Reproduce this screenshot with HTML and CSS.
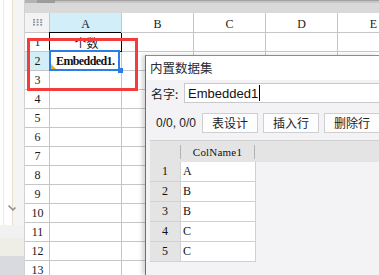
FILE: index.html
```html
<!DOCTYPE html>
<html lang="zh">
<head>
<meta charset="utf-8">
<link rel="stylesheet" href="styles.css">
</head>
<body>
<div class="app">
  <aside class="side">
    <div class="side-main">
      <svg class="chev" width="8" height="7" viewBox="0 0 8 7"><path d="M0.5 0.5 L5 5 L7.5 2.5" fill="none" stroke="#8a8a8a" stroke-width="1.5"/></svg>
    </div>
    <div class="side-f1"></div>
    <div class="side-f2"></div>
    <div class="side-f3"></div>
  </aside>
  <main class="sheet">
    <div class="hscroll"><span class="seg1"></span><span class="seg2"></span><span class="seg3"></span></div>
    <div class="band"></div>
    <div class="row head">
      <div class="cell rn corner">
        <svg width="10" height="7" viewBox="0 0 10 7">
          <g fill="#8c98a4">
            <rect x="0" y="0" width="2" height="1.6"/><rect x="3.6" y="0" width="2" height="1.6"/><rect x="7.2" y="0" width="2" height="1.6"/>
            <rect x="0" y="2.5" width="2" height="1.6"/><rect x="3.6" y="2.5" width="2" height="1.6"/><rect x="7.2" y="2.5" width="2" height="1.6"/>
            <rect x="0" y="5" width="2" height="1.6"/><rect x="3.6" y="5" width="2" height="1.6"/><rect x="7.2" y="5" width="2" height="1.6"/>
          </g>
        </svg>
      </div>
      <div class="cell col hl">A</div>
      <div class="cell col">B</div>
      <div class="cell col">C</div>
      <div class="cell col">D</div>
      <div class="cell col">E</div>
    </div>
    <div class="row"><div class="cell rn">1</div><div class="cell col a1">个数</div><div class="cell col"></div><div class="cell col"></div><div class="cell col"></div><div class="cell col"></div></div>
    <div class="row"><div class="cell rn hl">2</div><div class="cell col emb">Embedded1.</div><div class="cell col"></div><div class="cell col"></div><div class="cell col"></div><div class="cell col"></div></div>
    <div class="row"><div class="cell rn">3</div><div class="cell col"></div><div class="cell col"></div><div class="cell col"></div><div class="cell col"></div><div class="cell col"></div></div>
    <div class="row"><div class="cell rn">4</div><div class="cell col"></div><div class="cell col"></div><div class="cell col"></div><div class="cell col"></div><div class="cell col"></div></div>
    <div class="row"><div class="cell rn">5</div><div class="cell col"></div><div class="cell col"></div><div class="cell col"></div><div class="cell col"></div><div class="cell col"></div></div>
    <div class="row"><div class="cell rn">6</div><div class="cell col"></div><div class="cell col"></div><div class="cell col"></div><div class="cell col"></div><div class="cell col"></div></div>
    <div class="row"><div class="cell rn">7</div><div class="cell col"></div><div class="cell col"></div><div class="cell col"></div><div class="cell col"></div><div class="cell col"></div></div>
    <div class="row"><div class="cell rn">8</div><div class="cell col"></div><div class="cell col"></div><div class="cell col"></div><div class="cell col"></div><div class="cell col"></div></div>
    <div class="row"><div class="cell rn">9</div><div class="cell col"></div><div class="cell col"></div><div class="cell col"></div><div class="cell col"></div><div class="cell col"></div></div>
    <div class="row"><div class="cell rn">10</div><div class="cell col"></div><div class="cell col"></div><div class="cell col"></div><div class="cell col"></div><div class="cell col"></div></div>
    <div class="row"><div class="cell rn">11</div><div class="cell col"></div><div class="cell col"></div><div class="cell col"></div><div class="cell col"></div><div class="cell col"></div></div>
    <div class="row"><div class="cell rn">12</div><div class="cell col"></div><div class="cell col"></div><div class="cell col"></div><div class="cell col"></div><div class="cell col"></div></div>
    <div class="row"><div class="cell rn">13</div><div class="cell col"></div><div class="cell col"></div><div class="cell col"></div><div class="cell col"></div><div class="cell col"></div></div>
  </main>
</div>

<div class="selbox"><span class="tri"></span><span class="handle"></span></div>
<div class="redbox"></div>

<section class="dlg">
  <div class="dlg-title">内置数据集</div>
  <div class="name-row">
    <span class="lbl">名字:</span>
    <div class="input">Embedded1<span class="caret"></span></div>
  </div>
  <div class="ops">
    <span class="count">0/0, 0/0</span>
    <button class="btn">表设计</button>
    <button class="btn">插入行</button>
    <button class="btn">删除行</button>
  </div>
  <div class="tbl">
    <div class="trow thead">
      <div class="tn"></div>
      <span class="sep"></span>
      <div class="th">ColName1</div>
      <span class="sep"></span>
    </div>
    <div class="trow"><div class="tn">1</div><div class="td">A</div></div>
    <div class="trow"><div class="tn">2</div><div class="td">B</div></div>
    <div class="trow"><div class="tn">3</div><div class="td">B</div></div>
    <div class="trow"><div class="tn">4</div><div class="td">C</div></div>
    <div class="trow"><div class="tn">5</div><div class="td">C</div></div>
  </div>
</section>
</body>
</html>
```

FILE: styles.css
```css
html, body {
  margin: 0;
  padding: 0;
}
body {
  width: 379px;
  height: 275px;
  overflow: hidden;
  position: relative;
  background: #fff;
  font-family: "Noto Sans CJK SC", "Liberation Sans", sans-serif;
}
.app {
  display: flex;
  height: 275px;
}
.side {
  width: 24px;
  flex-shrink: 0;
  border-right: 1px solid #d2d2d2;
  display: flex;
  flex-direction: column;
}
.side-main {
  flex: 1;
  display: flex;
  flex-direction: column;
  justify-content: flex-end;
  padding: 0 0 13px 8px;
  background: linear-gradient(to right, #fff 0 3px, #f1ead4 3px 4px, #fff 4px 12px, #e6dfcc 12px 13px, #f4f4f4 13px);
}
.chev { display: block; }
.side-f1 { height: 13px; background: #f1f1f1; }
.side-f2 { height: 18px; background: #eeede6; }
.side-f3 { height: 19px; background: #d8dadf; }

.sheet {
  flex: 1;
  overflow: hidden;
  font-family: "Liberation Serif", serif;
  color: #1a1a1a;
}
.hscroll {
  display: flex;
  height: 3px;
}
.seg1 { width: 12px; background: #b3b3b3; }
.seg2 { width: 18px; background: #9c9c9c; }
.seg3 { flex: 1; background: #c6c6c6; box-shadow: inset 0 1px 0 #a2a2a2; }
.band { height: 10px; background: #d9d9d9; }

.row {
  display: flex;
  height: 19px;
}
.row.head { height: 20px; }
.cell {
  flex-shrink: 0;
  box-sizing: border-box;
  border-right: 1px solid #c6c6c6;
  border-bottom: 1px solid #c6c6c6;
  display: flex;
  align-items: center;
  justify-content: center;
  font-size: 12px;
}
.rn { width: 25px; background: #fff; padding: 1px 0 0 1px; }
.col { width: 72px; background: #fff; }
.head .cell { padding-top: 3px; }
.corner { background: #f3f3f5; padding-top: 0 !important; }
.corner svg { display: block; margin-top: -1px; }
.hl { background: #d1eef9 !important; }
.a1 {
  border-color: #000;
  box-shadow: -1px -1px 0 #000;
  font-family: "Noto Sans CJK SC", sans-serif;
  font-size: 12px;
  padding-left: 2px;
}
.emb {
  font-weight: bold;
  font-size: 12px;
  letter-spacing: -0.6px;
  justify-content: flex-start;
  padding: 1px 0 0 6px;
  color: #111;
}

.selbox {
  position: absolute;
  left: 49px;
  top: 50px;
  width: 71px;
  height: 21px;
  box-sizing: border-box;
  border: 2px solid #2a7de6;
}
.tri {
  position: absolute;
  left: 0;
  bottom: 0;
  width: 0;
  height: 0;
  border-left: 5px solid #e6b021;
  border-top: 5px solid transparent;
}
.handle {
  position: absolute;
  right: -5px;
  bottom: -4px;
  width: 5px;
  height: 5px;
  background: #2a7de6;
}
.redbox {
  position: absolute;
  left: 27px;
  top: 38px;
  width: 111px;
  height: 53px;
  box-sizing: border-box;
  border: 3px solid #f43c3c;
}

.dlg {
  position: absolute;
  left: 145px;
  top: 55px;
  right: 0;
  bottom: 0;
  border-left: 1px solid #6f6f6f;
  border-top: 1px solid #8c8c8c;
  box-shadow: -3px 0 4px rgba(0, 0, 0, 0.16);
  background: #f3f3f5;
  overflow: hidden;
  color: #222;
}
.dlg-title {
  height: 24px;
  line-height: 24px;
  background: #fff;
  padding-left: 4px;
  font-size: 12.5px;
  color: #2a2a38;
  white-space: nowrap;
}
.name-row {
  display: flex;
  align-items: center;
  margin-top: 3px;
  padding-left: 5px;
  height: 20px;
}
.lbl {
  width: 33px;
  flex-shrink: 0;
  font-size: 12px;
  white-space: nowrap;
}
.input {
  flex: 1;
  margin-right: -10px;
  height: 20px;
  box-sizing: border-box;
  border: 1px solid #c9c9c9;
  background: #fff;
  padding-left: 3px;
  display: flex;
  align-items: center;
  font-family: "Liberation Sans", sans-serif;
  font-size: 13px;
  color: #111;
}
.caret {
  display: inline-block;
  width: 1px;
  height: 16px;
  background: #000;
  margin-left: 1px;
}
.ops {
  display: flex;
  align-items: center;
  margin-top: 10px;
  padding-left: 10px;
  height: 20px;
  white-space: nowrap;
}
.count {
  font-family: "Liberation Sans", sans-serif;
  font-size: 12px;
  margin-right: 6px;
  color: #222;
}
.btn {
  flex-shrink: 0;
  height: 20px;
  margin: 0 5px 0 0;
  padding: 0 9px;
  border: 1px solid #cfcfcf;
  background: #fdfdfd;
  font-family: "Noto Sans CJK SC", sans-serif;
  font-size: 12px;
  line-height: 18px;
  color: #222;
}
.tbl {
  margin: 7px 0 0 4px;
  border-top: 1px solid #d0d0d0;
  font-family: "Liberation Serif", serif;
  font-size: 12px;
  color: #111;
}
.trow {
  display: flex;
  height: 20px;
}
.thead {
  height: 21px;
  background: #e4e4e4;
  align-items: center;
}
.tn {
  width: 31px;
  flex-shrink: 0;
  box-sizing: border-box;
  height: 20px;
  background: #e4e4e4;
  border-right: 1px solid #d2d2d2;
  border-bottom: 1px solid #d2d2d2;
  display: flex;
  align-items: center;
  justify-content: center;
}
.thead .tn {
  width: 30px;
  height: 21px;
  border: 0;
}
.sep {
  width: 1px;
  height: 14px;
  background: #b2b2b2;
  flex-shrink: 0;
}
.th {
  width: 73px;
  flex-shrink: 0;
  text-align: center;
  font-size: 11px;
  letter-spacing: 0.2px;
}
.td {
  width: 75px;
  flex-shrink: 0;
  box-sizing: border-box;
  height: 20px;
  background: #fff;
  border-right: 1px solid #d0d0d0;
  border-bottom: 1px solid #d0d0d0;
  padding-left: 2px;
  display: flex;
  align-items: center;
}
```
